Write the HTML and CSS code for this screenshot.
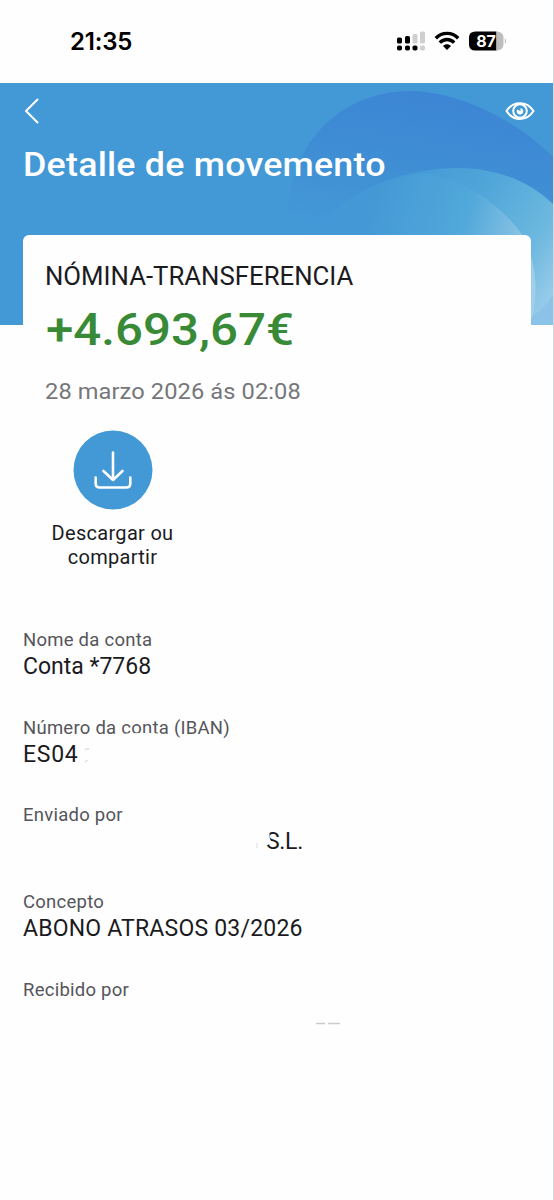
FILE: index.html
```
<!DOCTYPE html>
<html lang="gl">
<head>
<meta charset="utf-8">
<title>Detalle de movemento</title>
<link rel="stylesheet" href="styles.css">
</head>
<body>

<div class="status">
  <span class="time">21:35</span>
  <svg class="status-icons" width="114" height="26" viewBox="0 0 114 26">
    <g fill="#000">
      <rect x="1" y="8.5" width="5" height="6" rx="1.6"/>
      <rect x="9" y="7" width="5" height="7.5" rx="1.6"/>
      <rect x="1" y="16.5" width="5" height="5" rx="1.8"/>
      <rect x="9" y="16.5" width="5" height="5" rx="1.8"/>
      <rect x="16.5" y="16.5" width="5" height="5" rx="1.8"/>
    </g>
    <g fill="#cfcfcf">
      <rect x="16.5" y="5" width="5" height="9.5" rx="1.6"/>
      <rect x="24" y="2.5" width="5" height="12" rx="1.6"/>
      <rect x="24" y="16.5" width="5" height="5" rx="1.8"/>
    </g>
    <g fill="none" stroke="#000" stroke-width="3.4">
      <path d="M39.8 9.2 C46 2.8 56 2.8 62.2 9.2"/>
      <path d="M43.8 13.6 C48 9.4 54 9.4 58.2 13.6"/>
    </g>
    <path d="M47 17 C49.2 14.8 52.8 14.8 55 17 L51 21 Z"/>
    <path d="M79.5 2.5 H100.5 V21.5 H79.5 Q73 21.5 73 15.5 V8.5 Q73 2.5 79.5 2.5 Z"/>
    <path d="M100.5 2.5 Q107.5 3 107.500 8.5 V15.5 Q107.500 21 100.5 21.5 Z M108.8 9 Q111.500 12 108.8 15 Z" fill="#bdbdbd"/>
    <text class="battery" x="90" y="17.800" text-anchor="middle">87</text>
  </svg>
</div>

<div class="header">
  <svg class="waves" width="274" height="242" viewBox="280 83 274 242">
    <defs>
      <linearGradient id="dark" x1="0.55" y1="0" x2="0.35" y2="1">
        <stop offset="0" stop-color="#3c85d4"/>
        <stop offset="0.3" stop-color="#3f8dd4"/>
        <stop offset="0.62" stop-color="#4398d6"/>
      </linearGradient>
      <linearGradient id="outer" gradientUnits="userSpaceOnUse" x1="400" y1="190" x2="570" y2="300">
        <stop offset="0" stop-color="#449ad6"/>
        <stop offset="0.35" stop-color="#50a6d9"/>
        <stop offset="0.7" stop-color="#6cb8df"/>
        <stop offset="1" stop-color="#a9d3ee"/>
      </linearGradient>
      <linearGradient id="inner" gradientUnits="userSpaceOnUse" x1="360" y1="210" x2="540" y2="265">
        <stop offset="0" stop-color="#4398d5"/>
        <stop offset="0.55" stop-color="#51a8da"/>
        <stop offset="1" stop-color="#a1cfe9"/>
      </linearGradient>
    </defs>
    <path fill="url(#dark)" d="M288 235 C282 140 345 91 410 91 C465 92 520 124 554 158 V325 H288 Z"/>
    <path fill="url(#outer)" d="M312 235 C350 185 408 168 460 168 C500 169 530 182 554 205 V325 H312 Z"/>
    <path fill="url(#inner)" d="M312 235 C335 205 370 180 425 173 C465 180 502 205 523 236 C536 260 538 290 533 316 V325 H312 Z"/>
    <path fill="#8bc3e8" d="M554 293 C548 303 540 311 530 319 V325 H554 Z"/>
  </svg>
  <div class="bar">
    <svg width="20" height="28" viewBox="0 0 20 28"><path d="M16.5 2.5 L5 14 L16.5 25.5" fill="none" stroke="#fff" stroke-width="2" stroke-linecap="round" stroke-linejoin="round"/></svg>
    <svg width="32" height="22" viewBox="0 0 32 22" fill="none" stroke="#fff" stroke-width="2">
      <path d="M2.5 11 C9 0.5 23 0.5 29.5 11 C23 21.5 9 21.5 2.5 11 Z" stroke-linejoin="round"/>
      <circle cx="16" cy="11" r="6.8"/>
      <path d="M16.500 11 V8 A3.300 3.300 0 1 1 13.2 9.5 Z" fill="#fff" stroke="none"/>
    </svg>
  </div>
  <h1 class="title"><span>Detalle de movemento</span></h1>
</div>

<div class="card">
  <div class="kind"><span>NÓMINA-TRANSFERENCIA</span></div>
  <div class="amount"><span>+4.693,67€</span></div>
  <div class="date"><span>28 marzo 2026 ás 02:08</span></div>
  <div class="action">
    <svg width="80" height="80" viewBox="0 0 80 80">
      <circle cx="40" cy="40" r="39.5" fill="#4398d6"/>
      <path d="M40 22.5 V49.5 M30.5 41 L40 50 L49.5 41 M22.7 47.5 V53.5 Q22.7 57.5 26.7 57.5 H53.3 Q57.3 57.5 57.3 53.5 V47.5" fill="none" stroke="#fff" stroke-width="2.6" stroke-linecap="round" stroke-linejoin="round"/>
    </svg>
    <div class="action-text">Descargar ou<br>compartir</div>
  </div>
</div>

<div class="details">
  <div class="row">
    <div class="label">Nome da conta</div>
    <div class="value">Conta *7768</div>
  </div>
  <div class="row">
    <div class="label">Número da conta (IBAN)</div>
    <div class="value iban">ES04</div>
    <svg class="mask" width="430" height="60" viewBox="0 0 430 60">
      <path d="M118 20 Q125 17.5 150 18 L166 19 L178 22 L190 26 L410 30 V54 H98 V24 Z" fill="#fefefe"/>
      <path d="M85 35 Q87 33 89 34 M88 45 L85 47" fill="none" stroke="#ddd" stroke-width="1.5"/>
    </svg>
  </div>
  <div class="row">
    <div class="label">Enviado por</div>
    <div class="value sender">S.L.</div>
    <svg class="mask" width="310" height="60" viewBox="0 0 310 60">
      <path d="M262 28 H269.5 V35 L271 40 L268 43 H262 Z" fill="#fefefe"/>
      <path d="M257 41 V46" stroke="#ddd"/>
    </svg>
  </div>
  <div class="row">
    <div class="label">Concepto</div>
    <div class="value concept">ABONO ATRASOS 03/2026</div>
  </div>
  <div class="row">
    <div class="label">Recibido por</div>
    <svg class="mask" width="380" height="60" viewBox="0 0 380 60">
      <path d="M316 46.5 H325 M328 46.5 H340" stroke="#ccc" stroke-width="1.5"/>
    </svg>
  </div>
</div>

</body>
</html>
```

FILE: styles.css
```
* {
  box-sizing: border-box;
}
body {
  margin: 0;
  height: 1200px;
  overflow: hidden;
  background: #fefefe;
  border-right: 1px solid #d5d8db;
  font-family: Roboto, "Liberation Sans", sans-serif;
  color: #1b1b1f;
  white-space: nowrap;
}
.status {
  height: 83px;
  padding: 29px 43px 0 70px;
  display: flex;
  justify-content: space-between;
  align-items: flex-start;
}
.time {
  font: 600 24px/26px Inter, sans-serif;
  letter-spacing: -0.2px;
  color: #000;
}
.battery {
  font: 700 16px Inter, sans-serif;
  fill: #fff;
}
.header {
  position: relative;
  height: 242px;
  background: #4398d6;
}
.waves {
  position: absolute;
  top: 0;
  right: -1px;
}
.bar {
  position: relative;
  display: flex;
  justify-content: space-between;
  align-items: center;
  height: 28px;
  margin: 0 17px 0 21px;
  top: 14px;
}
/* stretched a bit, the headings are wider than plain Roboto */
.title span,
.kind span,
.amount span,
.date span {
  display: inline-block;
  transform-origin: 0 50%;
}
.title {
  position: relative;
  margin: 0;
  padding: 34px 0 0 23px;
  font-size: 33px;
  line-height: 40px;
  font-weight: 500;
  letter-spacing: 0.2px;
  color: #fff;
}
.title span {
  transform: scaleX(1.085);
}
.card {
  position: relative;
  height: 392px;
  margin: -90px 22px 0 23px;
  padding: 24px 22px 0;
  border-radius: 6px;
  background: #fefefe;
}
.kind {
  font-size: 25px;
  line-height: 36px;
}
.kind span {
  transform: scaleX(1.03);
}
.amount {
  margin-top: 9px;
  padding-left: 1px;
  font-size: 45px;
  line-height: 52px;
  font-weight: 500;
  color: #388a36;
}
.amount span {
  transform: scaleX(1.095);
}
.date {
  margin-top: 20px;
  font-size: 22.5px;
  line-height: 30px;
  letter-spacing: 0.1px;
  color: #76767a;
}
.date span {
  transform: scaleX(1.05);
}
.action {
  width: 135px;
  margin-top: 24px;
  display: flex;
  flex-direction: column;
  align-items: center;
}
.action-text {
  margin-top: 11px;
  font-size: 20px;
  line-height: 24px;
  letter-spacing: 0.3px;
  text-align: center;
}
.details {
  padding: 0.4px 0 0 23px;
}
.row {
  position: relative;
  height: 87.3px;
}
.label {
  font-size: 18.5px;
  line-height: 26px;
  letter-spacing: 0.25px;
  color: #55555a;
}
.value {
  font-size: 23px;
  line-height: 28px;
}
.iban {
  letter-spacing: 0.7px;
}
.sender {
  padding-left: 243px;
  letter-spacing: -0.3px;
}
.concept {
  letter-spacing: 0.2px;
}
.mask {
  position: absolute;
  left: -23px;
  top: 0;
}
```
